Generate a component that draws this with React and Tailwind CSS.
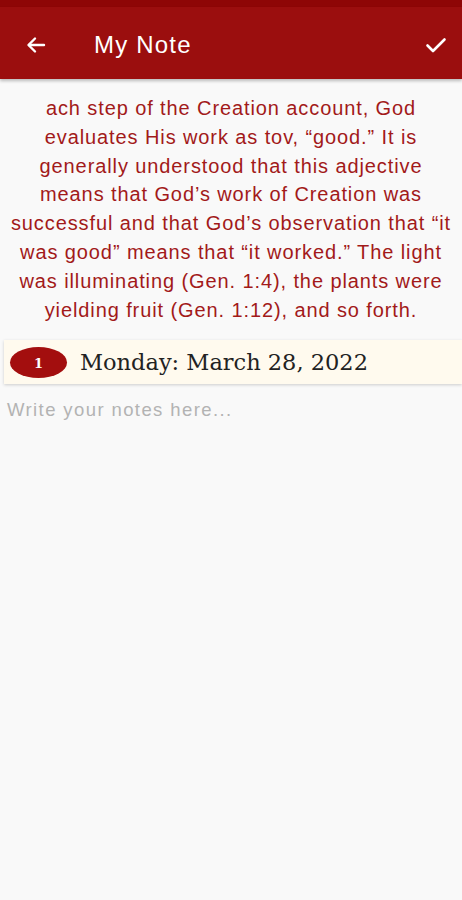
import React from 'react';

const passage =
  'ach step of the Creation account, God evaluates His work as tov, \u201cgood.\u201d It is generally understood that this adjective means that God\u2019s work of Creation was successful and that God\u2019s observation that \u201cit was good\u201d means that \u201cit worked.\u201d The light was illuminating (Gen. 1:4), the plants were yielding fruit (Gen. 1:12), and so forth.';

const App = () => {
  return (
    <div className="min-h-[900px] bg-[#f9f9f9] font-['Liberation_Sans',Arial,sans-serif]">
      {/* status bar + toolbar */}
      <div className="h-[7px] bg-[#8e0606]" />
      <header className="flex h-[72px] items-center bg-[#9b0e0e] pt-[4px] shadow-[0_2px_3px_rgba(0,0,0,0.25)]">
        <button className="ml-[24px] flex h-6 w-6 items-center justify-center text-white">
          <svg width="24" height="24" viewBox="0 0 24 24" fill="none" stroke="currentColor" strokeWidth="2.4" strokeLinecap="round" strokeLinejoin="round">
            <path d="M20 12H5" />
            <path d="M11 5.5 4.5 12l6.5 6.5" />
          </svg>
        </button>
        <h1 className="ml-[46px] flex-1 text-[24px] tracking-[1.2px] text-white">My Note</h1>
        <button className="mr-[14px] flex h-6 w-6 items-center justify-center text-white">
          <svg width="24" height="24" viewBox="0 0 24 24" fill="none" stroke="currentColor" strokeWidth="2.6" strokeLinecap="round" strokeLinejoin="round">
            <path d="M3.5 12.5l5.5 5.5 11.5-11.5" />
          </svg>
        </button>
      </header>

      <main>
        <p className="px-[8px] pt-[15px] text-center text-[20px] leading-[28.8px] tracking-[0.9px] text-[#a21a1a]">{passage}</p>

        <div className="ml-[4px] mt-[16px] flex h-[44px] items-center bg-[#fffaee] shadow-[0_1px_3px_rgba(0,0,0,0.18)]">
          <span className="ml-[6px] flex h-[31px] w-[57px] items-center justify-center rounded-[50%] bg-[#a30e0e] pt-[2px] font-['DejaVu_Serif',serif] text-[13px] font-bold text-white">
            1
          </span>
          <span className="ml-[13px] font-['DejaVu_Serif','Liberation_Serif',serif] text-[22.5px] text-[#222]">
            Monday: March 28, 2022
          </span>
        </div>

        <textarea
          placeholder="Write your notes here..."
          className="mt-[12px] h-[400px] w-full resize-none bg-transparent px-[7px] text-[18.5px] tracking-[1.4px] text-[#333] outline-none placeholder:text-[#b3b3b3]"
        />
      </main>
    </div>
  );
};

export default App;
